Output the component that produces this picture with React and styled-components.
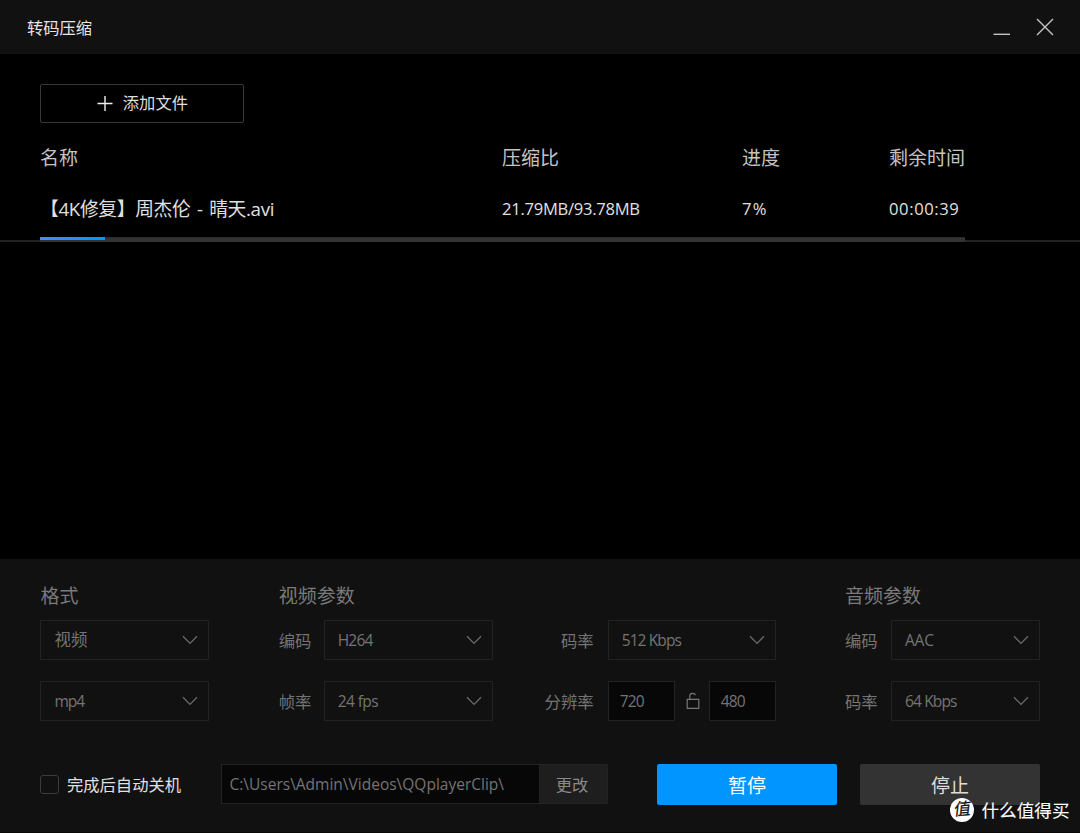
import React, { useState } from 'react';
import styled, { createGlobalStyle } from 'styled-components';

const GlobalStyle = createGlobalStyle`
    * {
        box-sizing: border-box;
    }

    body {
        margin: 0;
        background: #000;
        overflow: hidden;
        font-family: "Open Sans", "Noto Sans CJK SC", sans-serif;
    }

    button {
        padding: 0;
        font-family: inherit;
        cursor: pointer;
    }
`;

const files = [
    { name: '【4K修复】周杰伦 - 晴天.avi', ratio: '21.79MB/93.78MB', percent: 7, left: '00:00:39' },
];

function Arrow() {
    return (
        <ArrowIcon viewBox="0 0 16 10">
            <path d="M1 1.2 L8 8.4 L15 1.2" />
        </ArrowIcon>
    );
}

function Select({ value, width, cjk, track }) {
    return (
        <SelectBox type="button" $width={width}>
            <Value $cjk={cjk} $track={track}>{value}</Value>
            <Arrow />
        </SelectBox>
    );
}

function TitleBar() {
    return (
        <Header>
            <Title>转码压缩</Title>
            <WindowButtons>
                <svg width="18" height="18" viewBox="0 0 18 18">
                    <path d="M0.5 16.3 H17" />
                </svg>
                <svg width="18" height="18" viewBox="0 0 18 18">
                    <path d="M1 1 L17 17 M17 1 L1 17" />
                </svg>
            </WindowButtons>
        </Header>
    );
}

function FileList() {
    return (
        <Content>
            <AddButton type="button">
                <svg width="16" height="16" viewBox="0 0 16 16">
                    <path d="M0.5 7.5 H15.5 M8 0 V15" />
                </svg>
                <span>添加文件</span>
            </AddButton>
            <Columns>
                <HeadCell>名称</HeadCell>
                <HeadCell>压缩比</HeadCell>
                <HeadCell>进度</HeadCell>
                <HeadCell>剩余时间</HeadCell>
            </Columns>
            {files.map((file) => (
                <FileRow key={file.name}>
                    <FileCells>
                        <FileName $track="-0.36px">{file.name}</FileName>
                        <Cell $track="-0.28px">{file.ratio}</Cell>
                        <Cell $track="1.2px">{file.percent}%</Cell>
                        <Cell $track="0.6px">{file.left}</Cell>
                    </FileCells>
                    <Track>
                        <Bar style={{ width: `${file.percent}%` }} />
                    </Track>
                </FileRow>
            ))}
        </Content>
    );
}

function Settings() {
    const [shutdown, setShutdown] = useState(false);

    return (
        <Panel>
            <Groups>
                <Group>
                    <GroupTitle>格式</GroupTitle>
                    <Select value="视频" width="169px" cjk />
                    <Select value="mp4" width="169px" track="-1px" />
                </Group>
                <Group>
                    <GroupTitle>视频参数</GroupTitle>
                    <Line>
                        <Label $width="45px">编码</Label>
                        <Select value="H264" width="169px" track="-0.8px" />
                        <Label $width="115px" $right>码率</Label>
                        <Select value="512 Kbps" width="168px" track="-0.9px" />
                    </Line>
                    <Line>
                        <Label $width="45px">帧率</Label>
                        <Select value="24 fps" width="169px" track="-0.6px" />
                        <Label $width="115px" $right>分辨率</Label>
                        <SizeBox>720</SizeBox>
                        <LockIcon viewBox="0 0 14 18">
                            <path d="M1.2 7.4 H12.8 V16.4 H1.2 Z M3.8 7 V3.8 Q3.8 1.4 6.4 1.4 Q9 1.4 9.2 3.2" />
                        </LockIcon>
                        <SizeBox>480</SizeBox>
                    </Line>
                </Group>
                <Group>
                    <GroupTitle>音频参数</GroupTitle>
                    <Line>
                        <Label $width="46px">编码</Label>
                        <Select value="AAC" width="149px" track="-0.2px" />
                    </Line>
                    <Line>
                        <Label $width="46px">码率</Label>
                        <Select value="64 Kbps" width="149px" track="-0.85px" />
                    </Line>
                </Group>
            </Groups>
            <Footer>
                <Shutdown onClick={() => setShutdown(!shutdown)}>
                    <CheckBox $checked={shutdown} />
                    完成后自动关机
                </Shutdown>
                <PathBox>C:\Users\Admin\Videos\QQplayerClip\</PathBox>
                <ChangeButton type="button">更改</ChangeButton>
                <ActionButton type="button" $primary>暂停</ActionButton>
                <ActionButton type="button">停止</ActionButton>
            </Footer>
        </Panel>
    );
}

function App() {
    return (
        <Window>
            <GlobalStyle />
            <TitleBar />
            <FileList />
            <Settings />
            <Watermark>
                <Badge>
                    <BadgeText>值</BadgeText>
                </Badge>
                <WatermarkText>什么值得买</WatermarkText>
            </Watermark>
        </Window>
    );
}

const Window = styled.div`
    position: relative;
    display: flex;
    flex-direction: column;
    width: 1080px;
    height: 833px;
    background: #000;
    color: #d6d6d6;
`;

const Header = styled.header`
    display: flex;
    justify-content: space-between;
    align-items: center;
    height: 54px;
    padding: 0 26px 0 27px;
    background: #111;
`;

const Title = styled.div`
    padding-top: 2px;
    font-size: 16.3px;
    line-height: 52px;
    color: #e6e6e6;
`;

const WindowButtons = styled.div`
    display: flex;
    gap: 25px;

    svg {
        fill: none;
        stroke: #c4c4c4;
        stroke-width: 1.4;
    }
`;

const Content = styled.main`
    flex: 1;
    padding-top: 30px;
`;

const AddButton = styled.button`
    display: flex;
    align-items: center;
    justify-content: center;
    gap: 10px;
    width: 204px;
    height: 39px;
    margin-left: 40.4px;
    border: 1px solid #383838;
    border-radius: 2px;
    background: #000;
    color: #dedede;
    font-size: 16.3px;
    line-height: 23px;

    svg {
        fill: none;
        stroke: #f0f0f0;
        stroke-width: 1.4;
    }
`;

const Columns = styled.div`
    display: grid;
    grid-template-columns: 462px 240px 147px 1fr;
    padding: 16px 0 0 40px;
`;

const HeadCell = styled.div`
    padding-top: 1px;
    font-size: 19px;
    line-height: 37px;
    color: #c4c4c4;
`;

const FileRow = styled.div`
    height: 65px;
    border-bottom: 2px solid #222;
`;

const FileCells = styled(Columns)`
    height: 60px;
    padding-top: 1px;
`;

const Cell = styled.div`
    font-size: 16.6px;
    line-height: 61px;
    letter-spacing: ${(props) => props.$track || 0};
    white-space: nowrap;
    color: #e0e0e0;
`;

const FileName = styled(Cell)`
    font-size: 18.8px;
    line-height: 63px;
    word-spacing: 2px;
`;

const Track = styled.div`
    width: 925px;
    height: 5px;
    margin-left: 40.4px;
    border-top: 1px solid #2a2a2a;
    background: #333;
`;

const Bar = styled.div`
    height: 3px;
    margin-top: -1px;
    background: linear-gradient(90deg, #3f8fff, #0095ff);
`;

const Panel = styled.section`
    height: 274px;
    padding-top: 18px;
    background: #111;
    border-bottom: 1px solid #090606;
    color: #747474;
`;

const Groups = styled.div`
    display: flex;
    justify-content: space-between;
    padding: 0 40px 0 40.4px;
`;

const Group = styled.div`
    display: flex;
    flex-direction: column;
    gap: 21px;
`;

const GroupTitle = styled.div`
    height: 22px;
    font-size: 19px;
    line-height: 39px;
    color: #7a7a7a;
`;

const Line = styled.div`
    display: flex;
    align-items: center;
`;

const Label = styled.div`
    width: ${(props) => props.$width};
    padding-top: 2px;
    padding-right: ${(props) => (props.$right ? '14px' : 0)};
    text-align: ${(props) => (props.$right ? 'right' : 'left')};
    font-size: 16.4px;
    line-height: 38px;
`;

const SelectBox = styled.button`
    display: flex;
    align-items: center;
    justify-content: space-between;
    width: ${(props) => props.$width};
    height: 40px;
    padding: 0 10px 0 13px;
    border: 1px solid #222;
    background: #111;
    color: #747474;
`;

const Value = styled.span`
    padding-bottom: ${(props) => (props.$cjk ? '2px' : '1px')};
    font-size: ${(props) => (props.$cjk ? '16.5px' : '15.5px')};
    letter-spacing: ${(props) => props.$track || 0};
`;

const ArrowIcon = styled.svg`
    width: 16px;
    height: 10px;
    fill: none;
    stroke: #6a6a6a;
    stroke-width: 1.3;
`;

const SizeBox = styled.div`
    width: 67px;
    height: 40px;
    padding-left: 11px;
    border: 1px solid #222;
    background: #070707;
    font-size: 15.5px;
    line-height: 38px;
    letter-spacing: -0.8px;
`;

const LockIcon = styled.svg`
    width: 14px;
    height: 18px;
    margin: 0 9px 0 11px;
    fill: none;
    stroke: #777;
    stroke-width: 1.2;
`;

const Footer = styled.div`
    display: flex;
    align-items: flex-start;
    height: 41px;
    margin-top: 43px;
    padding: 0 40px;
`;

const Shutdown = styled.div`
    display: flex;
    align-items: center;
    gap: 8px;
    width: 181px;
    height: 41px;
    font-size: 16.3px;
    line-height: 22px;
    color: #e0e0e0;
    white-space: nowrap;
`;

const CheckBox = styled.span`
    width: 19px;
    height: 19px;
    border: 1px solid #3c3c3c;
    border-radius: 3px;
    background: ${(props) => (props.$checked ? '#0090ff' : '#111')};
`;

const PathBox = styled.div`
    width: 318px;
    height: 40px;
    padding-left: 7.5px;
    border: 1px solid #222;
    border-right: 0;
    background: #070707;
    font-size: 15.5px;
    line-height: 38px;
    white-space: nowrap;
`;

const ChangeButton = styled.button`
    width: 69px;
    height: 40px;
    padding-right: 3px;
    border: 1px solid #222;
    background: #1e1e1e;
    color: #8a8a8a;
    font-size: 16.3px;
`;

const ActionButton = styled.button`
    width: 180px;
    height: 41px;
    margin-left: ${(props) => (props.$primary ? '49px' : '23px')};
    padding-top: 1px;
    border: 0;
    border-radius: 2px;
    background: ${(props) => (props.$primary ? '#0095ff' : '#333')};
    color: ${(props) => (props.$primary ? '#fff' : '#dcdcdc')};
    font-size: 19px;
`;

const Watermark = styled.div`
    position: absolute;
    right: 10.5px;
    bottom: 10px;
    display: flex;
    align-items: center;
    gap: 7.5px;
    height: 26px;
    color: #fff;
`;

const WatermarkText = styled.span`
    padding-bottom: 2px;
    font-size: 17.6px;
    -webkit-text-stroke: 0.1px #fff;
`;

const Badge = styled.span`
    display: flex;
    align-items: center;
    justify-content: center;
    width: 24px;
    height: 24px;
    border-radius: 50%;
    background: #fff;
`;

const BadgeText = styled.span`
    color: #111;
    font-size: 17px;
    line-height: 22px;
    padding-bottom: 2px;
    -webkit-text-stroke: 0.2px #111;
    transform: skew(-6deg, -4deg);
`;

export default App;
